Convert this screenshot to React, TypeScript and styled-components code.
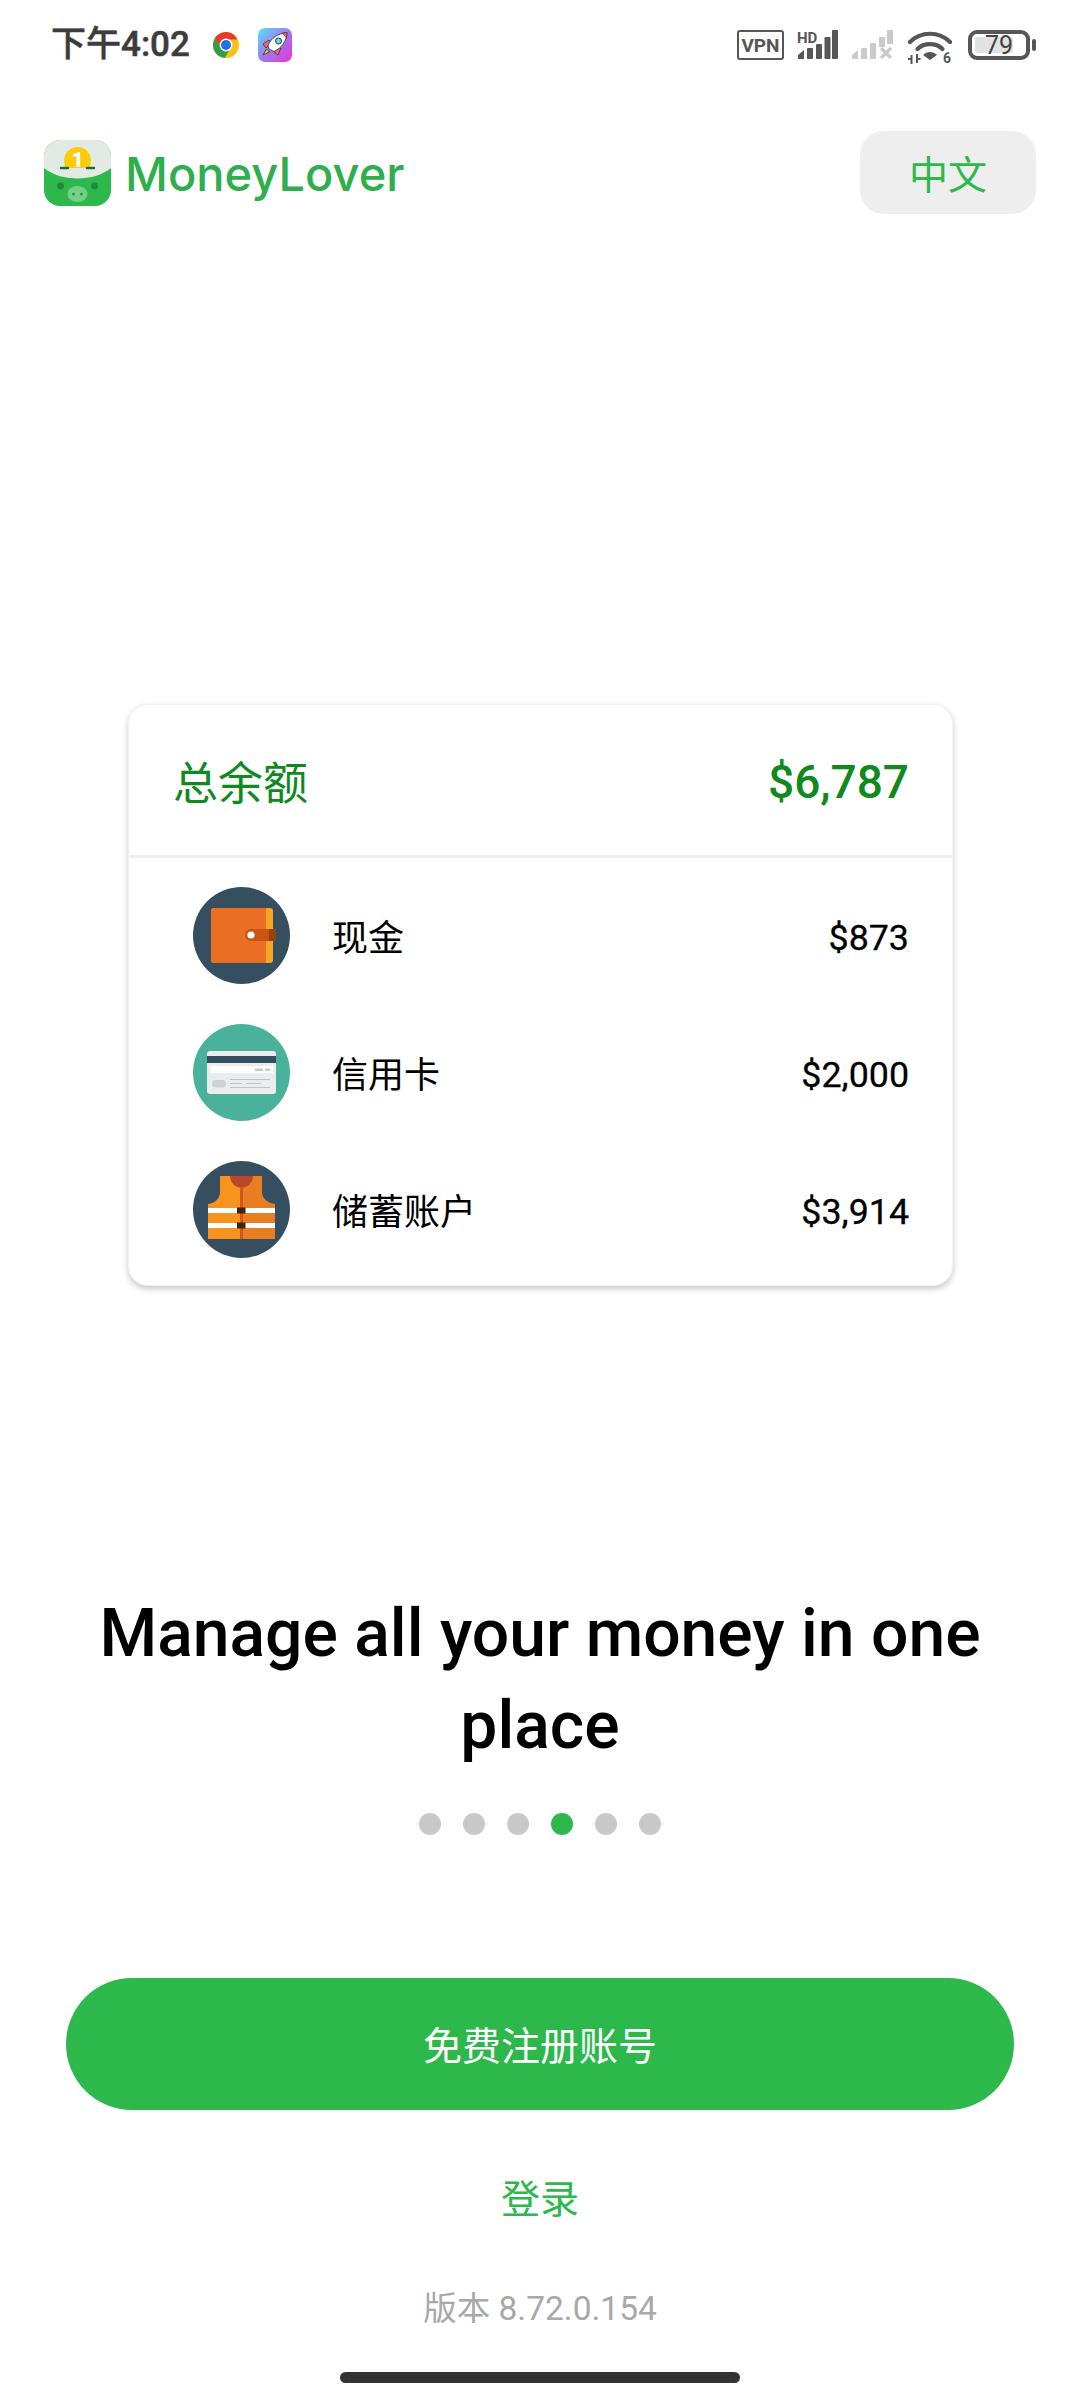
// App.tsx
import React from 'react';
import styled, { createGlobalStyle } from 'styled-components';

const GlobalStyle = createGlobalStyle`
  html, body {
    margin: 0;
    padding: 0;
    background: #fff;
  }
  * {
    box-sizing: border-box;
  }
`;

const FONT = `Roboto, "Noto Sans CJK SC", sans-serif`;

const Page = styled.div`
  width: 1080px;
  height: 2400px;
  background: #fff;
  overflow: hidden;
  display: flex;
  flex-direction: column;
  font-family: ${FONT};
`;

const StatusBar = styled.div`
  height: 34px;
  margin-top: 28px;
  padding: 0 44px 0 51px;
  display: flex;
  align-items: center;
  justify-content: space-between;
`;

const StatusGroup = styled.div`
  display: flex;
  align-items: center;
`;

const Time = styled.span`
  font-size: 35px;
  font-weight: 500;
  color: #3c3c3c;
  margin-right: 22px;
  line-height: 34px;
  -webkit-text-stroke: 0.5px #3c3c3c;
`;

const StatusIcon = styled.svg<{ $left?: number }>`
  display: block;
  flex: none;
  margin-left: ${(p) => p.$left ?? 0}px;
`;

const Header = styled.div`
  height: 83px;
  margin-top: 69px;
  padding: 0 44px;
  display: flex;
  align-items: center;
  justify-content: space-between;
`;

const Brand = styled.div`
  display: flex;
  align-items: center;
  gap: 14px;
`;

const BrandName = styled.span`
  font-family: Inter, sans-serif;
  font-size: 47px;
  font-weight: 500;
  letter-spacing: 0;
  color: #2fae4e;
  line-height: 66px;
  padding-top: 2px;
`;

const LangButton = styled.button`
  width: 176px;
  height: 83px;
  border: none;
  border-radius: 24px;
  background: #eeeeee;
  color: #2db84c;
  font-family: ${FONT};
  font-size: 39px;
  padding: 0 0 2px;
`;

const Card = styled.div`
  width: 825px;
  height: 582px;
  margin: 490px 0 0 128px;
  background: #fff;
  border-radius: 20px;
  border: 1px solid #f2f2f2;
  box-shadow: 0 3px 6px rgba(0, 0, 0, 0.22);
`;

const CardHeader = styled.div`
  height: 153px;
  padding: 0 43px 0 44px;
  border-bottom: 3px solid #eeeeee;
  display: flex;
  align-items: center;
  justify-content: space-between;
  color: #10891f;
`;

const TotalLabel = styled.span`
  font-size: 45px;
`;

const TotalValue = styled.span`
  font-size: 46px;
  font-weight: 500;
  padding-top: 4px;
`;

const AccountList = styled.div`
  padding: 29px 43px 0 64px;
  display: flex;
  flex-direction: column;
  gap: 40px;
`;

const AccountRow = styled.div`
  height: 97px;
  display: flex;
  align-items: center;
  color: #000;
`;

const AccountName = styled.span`
  flex: 1;
  margin-left: 42px;
  font-size: 36px;
  padding-bottom: 2px;
`;

const AccountAmount = styled.span`
  font-size: 35.8px;
  font-weight: 400;
  padding-top: 4px;
  -webkit-text-stroke: 0.3px #000;
`;

const Title = styled.h1`
  margin: 302px 0 0;
  padding: 0 80px;
  text-align: center;
  font-size: 66px;
  font-weight: 500;
  line-height: 92px;
  color: #000;
`;

const Dots = styled.div`
  margin-top: 41px;
  display: flex;
  justify-content: center;
  gap: 22px;
`;

const Dot = styled.span<{ $active?: boolean }>`
  width: 22px;
  height: 22px;
  border-radius: 50%;
  background: ${(p) => (p.$active ? '#2db84c' : '#c8c8c8')};
`;

const SignUpButton = styled.button`
  width: 948px;
  height: 132px;
  margin: 143px 0 0 66px;
  border: none;
  border-radius: 66px;
  background: #2db84c;
  color: #fff;
  font-family: ${FONT};
  font-size: 39px;
  padding: 0 0 3px;
`;

const LoginLink = styled.div`
  margin-top: 65px;
  height: 50px;
  line-height: 50px;
  text-align: center;
  font-size: 39px;
  color: #2db84c;
`;

const Version = styled.div`
  margin-top: 62px;
  height: 44px;
  line-height: 44px;
  text-align: center;
  font-size: 33.5px;
  color: #a8a8a8;
`;

const HomeBar = styled.div`
  width: 400px;
  height: 11px;
  margin: 41px 0 0 340px;
  border-radius: 6px;
  background: #333333;
`;

const ChromeIcon = () => (
  <StatusIcon width="28" height="28" viewBox="0 0 28 28">
    <circle cx="14" cy="14" r="13" fill="#fbc116" />
    <path d="M14 1a13 13 0 0 0-11.3 6.5L8.8 17 14 8.5h11.3A13 13 0 0 0 14 1z" fill="#e33b2e" />
    <path d="M2.7 7.5A13 13 0 0 0 12.6 26.9L18.6 17H9.5z" fill="#2f9e44" />
    <circle cx="14" cy="14" r="6.4" fill="#fff" />
    <circle cx="14" cy="14" r="5" fill="#1a73e8" />
  </StatusIcon>
);

const RocketIcon = () => (
  <StatusIcon $left={18} width="34" height="34" viewBox="0 0 34 34">
    <defs>
      <linearGradient id="rocketBg" x1="0" y1="0" x2="1" y2="1">
        <stop offset="0" stopColor="#55e2fb" />
        <stop offset="0.55" stopColor="#a472ea" />
        <stop offset="1" stopColor="#ee30dc" />
      </linearGradient>
    </defs>
    <rect width="34" height="34" rx="7" fill="url(#rocketBg)" />
    <path d="M5 27l3.5-6 3 3z" fill="#f7c325" stroke="#3a2a3a" strokeWidth="0.8" />
    <path d="M5 16l6-4 2 3-5 5z" fill="#ef6a6a" stroke="#3a2a3a" strokeWidth="0.8" />
    <path d="M20 27l3-7-3-1-4 5z" fill="#ef6a6a" stroke="#3a2a3a" strokeWidth="0.8" />
    <path d="M11 21L10 17.5C13 10 20 5.5 29 4.5 28.5 13 24 20 16 23.5z" fill="#fff" stroke="#3a2a3a" strokeWidth="0.8" />
    <path d="M24 5.2l5-.7-.6 5.2z" fill="#ef6a6a" stroke="#3a2a3a" strokeWidth="0.6" />
    <circle cx="20.5" cy="13" r="3" fill="#63d5e8" stroke="#3a2a3a" strokeWidth="0.9" />
  </StatusIcon>
);

const VpnIcon = () => (
  <StatusIcon $left={1} width="47" height="30" viewBox="0 0 47 30">
    <rect x="1" y="1" width="45" height="28" rx="2" fill="none" stroke="#565656" strokeWidth="2" />
    <text x="23.5" y="22" textAnchor="middle" fontFamily="Roboto, sans-serif" fontWeight="700" fontSize="19" fill="#565656">
      VPN
    </text>
  </StatusIcon>
);

const SimOneIcon = () => (
  <StatusIcon $left={13} width="41" height="30" viewBox="0 0 41 30">
    <path d="M1 29V25l6-5v9z" fill="#565656" />
    <rect x="10" y="18" width="6" height="11" rx="1" fill="#565656" />
    <rect x="19" y="14" width="6" height="15" rx="1" fill="#565656" />
    <rect x="27.5" y="7" width="6" height="22" rx="1" fill="#565656" />
    <rect x="35" y="0" width="6" height="29" rx="1" fill="#565656" />
    <text x="0" y="13" fontFamily="Roboto, sans-serif" fontWeight="700" fontSize="15" fill="#565656">
      HD
    </text>
  </StatusIcon>
);

const SimTwoIcon = () => (
  <StatusIcon $left={14} width="41" height="30" viewBox="0 0 41 30">
    <path d="M0 29V25l6-5v9z" fill="#cacaca" />
    <rect x="9" y="18" width="6" height="11" rx="1" fill="#cacaca" />
    <rect x="18" y="13" width="6" height="16" rx="1" fill="#cacaca" />
    <rect x="27" y="7" width="6" height="10" rx="1" fill="#cacaca" />
    <rect x="35" y="0" width="6" height="14" rx="1" fill="#cacaca" />
    <path d="M29 18l10 10M39 18L29 28" stroke="#cacaca" strokeWidth="3.5" />
  </StatusIcon>
);

const WifiIcon = () => (
  <StatusIcon $left={15} width="44" height="40" viewBox="0 -5 44 40">
    <path d="M2 12C13 1 31 1 42 12" fill="none" stroke="#565656" strokeWidth="4.2" strokeLinecap="round" />
    <path d="M9.5 19C16 12.5 28 12.5 34.5 19" fill="none" stroke="#565656" strokeWidth="4.2" strokeLinecap="round" />
    <path d="M15 25C19 21 25 21 29 25L22 30z" fill="#565656" />
    <path d="M3.5 25v9M9 24v9" stroke="#565656" strokeWidth="2" />
    <path d="M0 29h3.5M9 29h3.5" stroke="#565656" strokeWidth="2" />
    <text x="35" y="33" fontFamily="Roboto, sans-serif" fontWeight="700" fontSize="14" fill="#565656">
      6
    </text>
  </StatusIcon>
);

const BatteryIcon = () => (
  <StatusIcon $left={16} width="68" height="30" viewBox="0 0 68 30">
    <rect x="2" y="2" width="58" height="26" rx="7" fill="none" stroke="#565656" strokeWidth="4" />
    <rect x="7" y="7" width="38" height="16" rx="2" fill="#e2e2e2" />
    <text x="31" y="24" textAnchor="middle" fontFamily="Roboto, sans-serif" fontWeight="400" fontSize="25" fill="#444">
      79
    </text>
    <rect x="64" y="9" width="4" height="12" rx="2" fill="#565656" />
  </StatusIcon>
);

const LogoIcon = () => (
  <StatusIcon width="67" height="66" viewBox="0 0 67 66">
    <rect width="67" height="66" rx="16" fill="#2db84c" />
    <path d="M0 16A16 16 0 0 1 16 0H51A16 16 0 0 1 67 16V28C50 42 17 42 0 28z" fill="#e1ebe4" />
    <path d="M22.3 28A13.5 13.5 0 1 1 44.7 28z" fill="#fecb0a" />
    <text x="33.5" y="27" textAnchor="middle" fontFamily="Roboto, sans-serif" fontWeight="900" fontSize="21" fill="#fff">
      1
    </text>
    <path d="M17 28h33" stroke="#1c6b2f" strokeWidth="2.4" strokeLinecap="round" strokeDasharray="7 19 7" />
    <circle cx="16.5" cy="46" r="3.4" fill="#1f8a3a" />
    <circle cx="50.5" cy="46" r="3.4" fill="#1f8a3a" />
    <ellipse cx="33.5" cy="54" rx="10" ry="8" fill="#72d088" />
    <circle cx="29.5" cy="54" r="1.5" fill="#2a9a45" />
    <circle cx="37.5" cy="54" r="1.5" fill="#2a9a45" />
  </StatusIcon>
);

const WalletIcon = () => (
  <StatusIcon width="97" height="97" viewBox="0 0 97 97">
    <circle cx="48.5" cy="48.5" r="48.5" fill="#364f60" />
    <rect x="18" y="21" width="62" height="55" rx="3" fill="#f6a623" />
    <path d="M21 21H73V76H21a3 3 0 0 1-3-3V24a3 3 0 0 1 3-3z" fill="#e96f25" />
    <path d="M58 42H81a2 2 0 0 1 2 2v8a2 2 0 0 1-2 2H58a6 6 0 0 1 0-12z" fill="#cb5412" />
    <path d="M76 42h5a2 2 0 0 1 2 2v8a2 2 0 0 1-2 2h-5z" fill="#96400f" />
    <circle cx="58" cy="48" r="3.6" fill="#fff" />
  </StatusIcon>
);

const CreditCardIcon = () => (
  <StatusIcon width="97" height="97" viewBox="0 0 97 97">
    <circle cx="48.5" cy="48.5" r="48.5" fill="#4ab29b" />
    <rect x="14" y="27" width="69" height="43" rx="3" fill="#ebecee" />
    <rect x="14" y="32" width="69" height="7" fill="#364f60" />
    <rect x="18" y="42" width="62" height="7" fill="#fff" />
    <rect x="62" y="44.5" width="8" height="2.5" fill="#c4c9cc" />
    <rect x="72" y="44.5" width="5" height="2.5" fill="#c4c9cc" />
    <rect x="19" y="56" width="14" height="7.5" rx="3.5" fill="#cdd2d5" />
    <path d="M37 55.5h40M37 59.5h12M53 59.5h15M37 63.5h40" stroke="#c0c4c7" strokeWidth="1.2" />
  </StatusIcon>
);

const VestIcon = () => (
  <StatusIcon width="97" height="97" viewBox="0 0 97 97">
    <circle cx="48.5" cy="48.5" r="48.5" fill="#364f60" />
    <path d="M27 15H48V78H15V43C22 42 27 38 27 31z" fill="#f7931e" />
    <path d="M69 15H48V78H82V43C75 42 69 38 69 31z" fill="#e87d22" />
    <path d="M37 15H60A11.5 11.5 0 0 1 37 15z" fill="#b9482a" />
    <rect x="47" y="26" width="3" height="52" fill="#cf5a17" />
    <rect x="15" y="47" width="67" height="5" fill="#fff" />
    <rect x="15" y="62" width="67" height="5" fill="#fff" />
    <rect x="44" y="46.5" width="8.5" height="6" fill="#4a1f0c" />
    <rect x="44" y="61.5" width="8.5" height="6" fill="#4a1f0c" />
  </StatusIcon>
);

const accounts = [
  { name: '现金', amount: '$873', icon: <WalletIcon /> },
  { name: '信用卡', amount: '$2,000', icon: <CreditCardIcon /> },
  { name: '储蓄账户', amount: '$3,914', icon: <VestIcon /> },
];

const App = () => {
  return (
    <Page>
      <GlobalStyle />
      <StatusBar>
        <StatusGroup>
          <Time>下午4:02</Time>
          <ChromeIcon />
          <RocketIcon />
        </StatusGroup>
        <StatusGroup>
          <VpnIcon />
          <SimOneIcon />
          <SimTwoIcon />
          <WifiIcon />
          <BatteryIcon />
        </StatusGroup>
      </StatusBar>

      <Header>
        <Brand>
          <LogoIcon />
          <BrandName>MoneyLover</BrandName>
        </Brand>
        <LangButton>中文</LangButton>
      </Header>

      <Card>
        <CardHeader>
          <TotalLabel>总余额</TotalLabel>
          <TotalValue>$6,787</TotalValue>
        </CardHeader>
        <AccountList>
          {accounts.map((account) => (
            <AccountRow key={account.name}>
              {account.icon}
              <AccountName>{account.name}</AccountName>
              <AccountAmount>{account.amount}</AccountAmount>
            </AccountRow>
          ))}
        </AccountList>
      </Card>

      <Title>Manage all your money in one place</Title>

      <Dots>
        {[0, 1, 2, 3, 4, 5].map((i) => (
          <Dot key={i} $active={i === 3} />
        ))}
      </Dots>

      <SignUpButton>免费注册账号</SignUpButton>
      <LoginLink>登录</LoginLink>
      <Version>版本 8.72.0.154</Version>
      <HomeBar />
    </Page>
  );
};

export default App;
